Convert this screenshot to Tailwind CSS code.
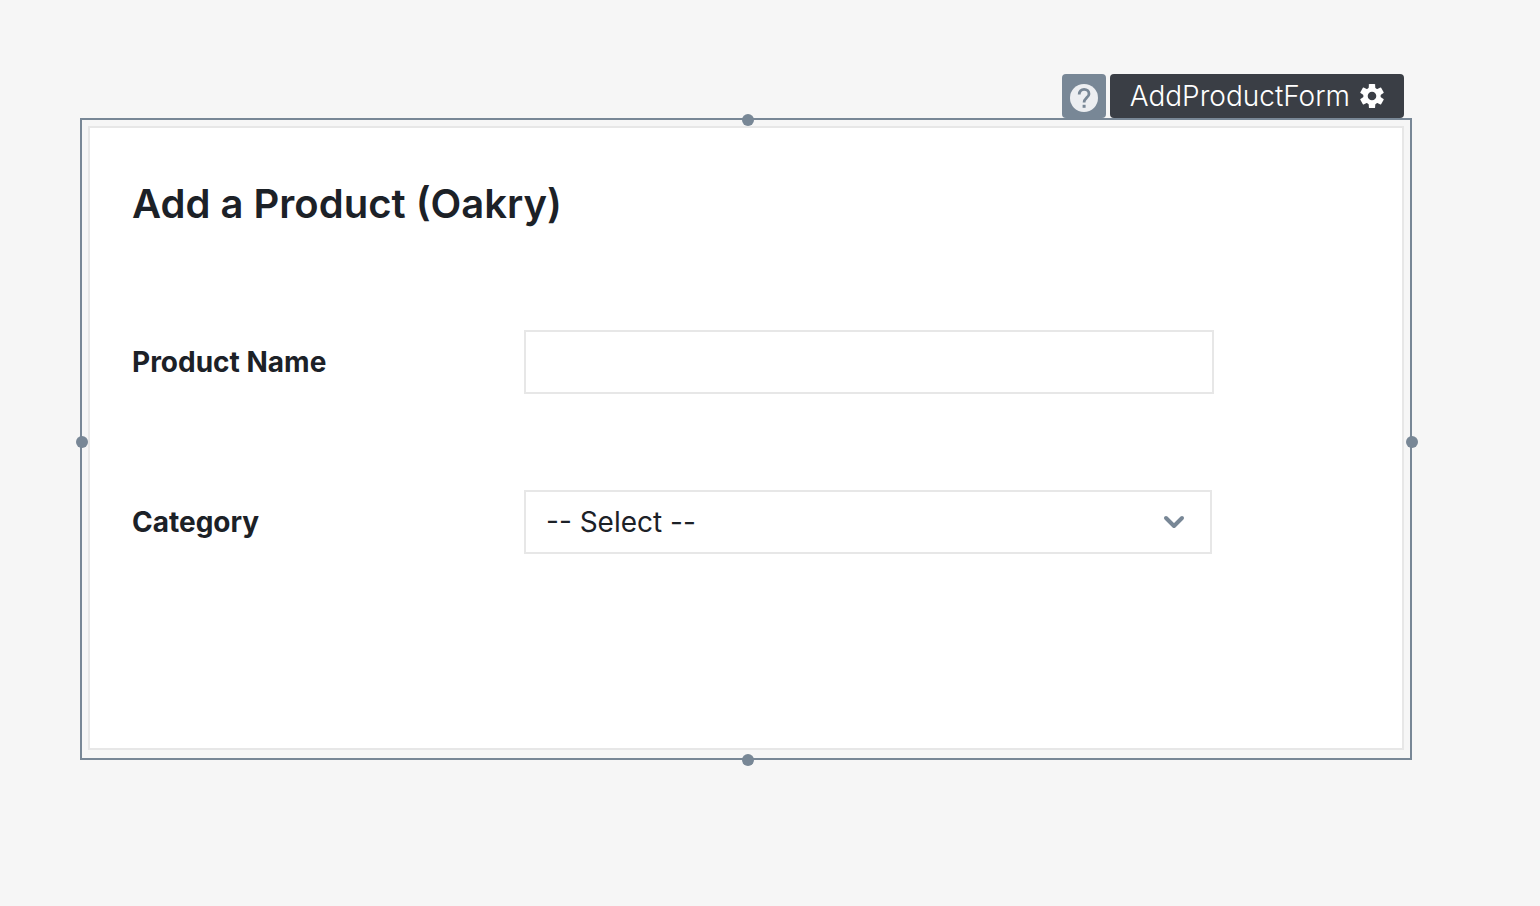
<!DOCTYPE html>
<html lang="en">
<head>
<meta charset="utf-8">
<meta name="viewport" content="width=device-width, initial-scale=1">
<title>AddProductForm</title>
<script src="https://cdn.jsdelivr.net/npm/@tailwindcss/browser@4"></script>
</head>
<body class="min-h-screen bg-[#f6f6f6] font-['Inter',sans-serif] text-[#1c2127]">
<main class="pt-[74px] pr-32 pb-20 pl-20">
  <div class="flex justify-end gap-1 pr-2">
    <button type="button" aria-label="Help" class="flex h-11 w-11 items-center justify-center rounded bg-[#788796] pt-1">
      <svg class="size-7" viewBox="0 0 28 28" fill="none" aria-hidden="true">
        <circle cx="14" cy="14" r="14" fill="#eceef1"/>
        <path d="M9.2 10.4C9.2 7.4 11.3 5.3 14.1 5.3C16.9 5.3 19 7.3 19 9.9C19 13.3 14.1 14 14.1 18.6" stroke="#788796" stroke-width="2.8"/>
        <path d="M12.6 20.8h3v3h-3z" fill="#788796"/>
      </svg>
    </button>
    <button type="button" class="flex h-11 items-center gap-2 rounded bg-[#3a3e45] pr-[18px] pl-5 text-[28px] leading-8 font-light text-white">
      <span>AddProductForm</span>
      <svg class="size-7" viewBox="0 0 28 28" fill="currentColor" aria-hidden="true">
        <defs><path id="tooth" d="M10.6 7L10.9 2.5Q11 2 11.5 2H16.5Q17 2 17.1 2.5L17.4 7z"/></defs>
        <circle cx="14" cy="14" r="6.5" fill="none" stroke="currentColor" stroke-width="4.4"/>
        <use href="#tooth"/>
        <use href="#tooth" transform="rotate(60 14 14)"/>
        <use href="#tooth" transform="rotate(120 14 14)"/>
        <use href="#tooth" transform="rotate(180 14 14)"/>
        <use href="#tooth" transform="rotate(240 14 14)"/>
        <use href="#tooth" transform="rotate(300 14 14)"/>
      </svg>
    </button>
  </div>
  <div class="relative border-2 border-[#788796] px-1.5 pt-1.5 pb-2">
    <form class="border-2 border-[#e7e7e7] bg-white pt-[50px] pr-[188px] pb-[194px] pl-[42px]">
      <h1 class="text-[40px] leading-[52px] font-semibold">Add a Product (Oakry)</h1>
      <div class="mt-[100px] flex items-center">
        <label for="product-name" class="w-[392px] shrink-0 text-[28px] leading-8 font-bold">Product Name</label>
        <input id="product-name" type="text" class="h-16 min-w-0 flex-1 border-2 border-[#e7e7e7] bg-white px-5 text-[28px] outline-none">
      </div>
      <div class="mt-24 flex items-center pr-0.5">
        <label for="category" class="w-[392px] shrink-0 text-[28px] leading-8 font-bold">Category</label>
        <div class="relative min-w-0 flex-1">
          <select id="category" class="block h-16 w-full appearance-none border-2 border-[#e7e7e7] bg-white px-5 text-[28px] outline-none">
            <option>-- Select --</option>
          </select>
          <svg class="pointer-events-none absolute top-6 right-[26px] h-4 w-6" viewBox="0 0 24 16" fill="none" stroke="#788796" stroke-width="4" stroke-linecap="round" stroke-linejoin="round" aria-hidden="true"><path d="M4 4l8 8 8-8"/></svg>
        </div>
      </div>
    </form>
    <span class="absolute -top-1.5 left-1/2 -ml-1 size-3 rounded-full bg-[#788796]"></span>
    <span class="absolute -bottom-2 left-1/2 -ml-1 size-3 rounded-full bg-[#788796]"></span>
    <span class="absolute top-1/2 -left-1.5 -mt-[3px] size-3 rounded-full bg-[#788796]"></span>
    <span class="absolute top-1/2 -right-2 -mt-[3px] size-3 rounded-full bg-[#788796]"></span>
  </div>
</main>
</body>
</html>
